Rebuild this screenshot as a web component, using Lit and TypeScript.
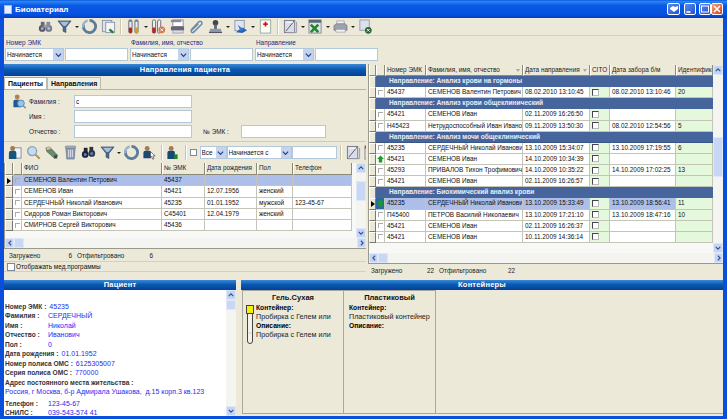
import { LitElement, html, css, svg } from "lit";
import { customElement } from "lit/decorators.js";

const I: Record<string, any> = {
  binoc: svg`<circle cx="4.5" cy="10" r="3.6" fill="#556"/><circle cx="11.5" cy="10" r="3.6" fill="#778"/><rect x="3" y="3" width="4" height="6" fill="#667"/><rect x="9" y="3" width="4" height="6" fill="#889"/><rect x="6" y="6" width="4" height="3" fill="#99a"/><circle cx="4.5" cy="10" r="1.6" fill="#9ab"/><circle cx="11.5" cy="10" r="1.6" fill="#abc"/>`,
  binocd: svg`<circle cx="4.5" cy="10" r="3.6" fill="#223"/><circle cx="11.5" cy="9" r="3.6" fill="#334"/><rect x="3" y="3" width="4" height="6" fill="#223"/><rect x="9" y="2" width="4" height="6" fill="#334"/><circle cx="4.5" cy="10" r="1.6" fill="#48c"/><circle cx="11.5" cy="9" r="1.6" fill="#48c"/>`,
  funnel: svg`<path d="M1 2h14L9.5 9v5.5L6.5 13V9z" fill="#4a6a8c" stroke="#2c4460" stroke-width=".6"/><path d="M3 3h10L9 7.5H7z" fill="#a8c0d8"/>`,
  refresh: svg`<path d="M8 1.5a6.5 6.5 0 1 1-6.2 4.6" fill="none" stroke="#5c7c9c" stroke-width="3"/><path d="M1 9a7 7 0 0 1 5-7.4" fill="none" stroke="#9ab2ca" stroke-width="2.6"/>`,
  copy: svg`<rect x="1.5" y="1.5" width="10" height="12" fill="#dde4ee" stroke="#8a96a8"/><rect x="5" y="3.5" width="9.5" height="11" fill="#f2f4f8" stroke="#8a96a8"/><path d="M9 11l4 3.5" stroke="#2a7a30" stroke-width="2.4"/>`,
  tube: svg`<rect x="3" y="1" width="3.4" height="14" rx="1.4" fill="#eee" stroke="#667"/><rect x="3" y="9" width="3.4" height="6" rx="1.2" fill="#b22"/><rect x="9.5" y="1" width="3.4" height="14" rx="1.4" fill="#eee" stroke="#667"/><rect x="9.5" y="9" width="3.4" height="6" rx="1.2" fill="#c9a818"/><rect x="3" y="1" width="3.4" height="2" fill="#68a"/><rect x="9.5" y="1" width="3.4" height="2" fill="#68a"/>`,
  tubex: svg`<rect x="1.5" y="1" width="3.4" height="14" rx="1.4" fill="#eee" stroke="#667"/><rect x="1.5" y="9" width="3.4" height="6" rx="1.2" fill="#b22"/><rect x="7" y="1" width="3.4" height="14" rx="1.4" fill="#eee" stroke="#667"/><circle cx="11.5" cy="11.5" r="3.6" fill="#d8764c"/><path d="M10 10l3 3m0-3l-3 3" stroke="#fff" stroke-width="1"/>`,
  print: svg`<rect x="3" y="1" width="11" height="7" fill="#fff" stroke="#889"/><rect x="1" y="1" width="11" height="2.4" fill="#88a"/><path d="M1 8h14v4H1z" fill="#667"/><path d="M3 12h11v3H3z" fill="#dde" stroke="#778" stroke-width=".6"/>`,
  clip: svg`<path d="M3 13l8.5-9a2 2 0 0 1 3 2.6L6 15a1.4 1.4 0 0 1-2.2-2L11 6" fill="none" stroke="#6a88a8" stroke-width="1.6" transform="translate(-1 -1)"/>`,
  stamp: svg`<circle cx="8" cy="4" r="3" fill="#445"/><rect x="6.5" y="6" width="3" height="5" fill="#667"/><rect x="2" y="10.5" width="12" height="3" fill="#8a98a8"/><rect x="1" y="13.5" width="14" height="1.5" fill="#556"/>`,
  bdoc: svg`<rect x="2" y="1.5" width="10" height="11" fill="#dfe4ee" stroke="#8a98b0"/><path d="M3 14l7-5 5 3-5 3z" fill="#2a62b0"/><path d="M5 6l6 5-3 2z" fill="#3a7ad0"/>`,
  rdoc: svg`<rect x="2.5" y="1" width="11" height="14" fill="#fbfcf4" stroke="#9aa"/><path d="M8 3v5M5.5 5.5h5" stroke="#d01818" stroke-width="1.8"/>`,
  note: svg`<rect x="1.5" y="1.5" width="11" height="13" fill="#d8dee8" stroke="#778"/><path d="M12 2L3 13" stroke="#556" stroke-width="1"/><path d="M3.5 3.5h7" stroke="#fff"/><path d="M14.5 3v11.5H4" fill="none" stroke="#99a"/>`,
  excel: svg`<rect x="1" y="1" width="13" height="14" fill="#dfe4e8" stroke="#889"/><rect x="1" y="1" width="13" height="3" fill="#5a6a78"/><path d="M3 6l8 8m0-8l-8 8" stroke="#1c8a2c" stroke-width="2.8"/>`,
  printg: svg`<path d="M4 2h8v4H4z" fill="#eef" stroke="#889" stroke-width=".6"/><path d="M1 7l3-2h9l2 2v5H1z" fill="#9aa2ac" stroke="#667" stroke-width=".6"/><path d="M3 11h10v3H3z" fill="#f4f4f4" stroke="#889" stroke-width=".6"/>`,
  dx: svg`<rect x="2" y="1" width="10" height="11" fill="#dde2ea" stroke="#99a"/><circle cx="11" cy="12" r="3.6" fill="#2c6a34"/><path d="M9.6 10.6l2.8 2.8m0-2.8l-2.8 2.8" stroke="#fff"/>`,
  userdoc: svg`<rect x="7" y="3" width="8" height="11" fill="#f0f4f8" stroke="#889"/><circle cx="6" cy="3.6" r="2.6" fill="#a87850"/><path d="M2 15V8.5q0-2.5 2.5-2.5h3Q10 6 10 8.5V15z" fill="#14567e"/>`,
  usermg: svg`<circle cx="5.5" cy="3.2" r="2.6" fill="#b88050"/><path d="M1.5 14V8q0-2 2-2h4q2 0 2 2v6z" fill="#1c5a94"/><circle cx="9.5" cy="10" r="3.6" fill="#9cc4ea" stroke="#58a" /><path d="M12 12.6l2.6 2.6" stroke="#889" stroke-width="1.6"/>`,
  mag: svg`<circle cx="6.5" cy="6.5" r="4.8" fill="#c4dcf0" stroke="#8aa0b8" stroke-width="1.4"/><path d="M10 10l4.6 4.6" stroke="#b09060" stroke-width="2.2"/>`,
  pencil: svg`<path d="M2 3l4-1 8.5 9-3 3.5L3 7z" fill="#6a8a6c" stroke="#40584a" stroke-width=".6"/><path d="M2 3l4-1 1.6 1.8-4 1.4z" fill="#d8c8a0"/><path d="M11 11l3.4 0-.4 3.4-3-.4z" fill="#3a4a3c"/>`,
  trash: svg`<path d="M3 3h10l-1 12H4z" fill="#8c9cac" stroke="#5c6c7c" stroke-width=".6"/><rect x="2.5" y="1" width="11" height="2.4" rx="1" fill="#a8b4c0" stroke="#5c6c7c" stroke-width=".5"/><path d="M6 5v8M8 5v8M10 5v8" stroke="#dde"/>`,
  usercur: svg`<circle cx="5.5" cy="3.6" r="2.6" fill="#a87850"/><path d="M1.5 14V8q0-2 2-2h4q2 0 2 2v6z" fill="#1c4a74"/><path d="M9 7l5 4.6h-2.4l1.2 3-1.4.5-1.2-3L9 13.4z" fill="#fff" stroke="#223" stroke-width=".6"/>`,
  userg: svg`<circle cx="5.5" cy="3.6" r="2.6" fill="#a87850"/><path d="M1.5 15V8q0-2 2-2h4q2 0 2 2v7z" fill="#144a74"/><rect x="9" y="10" width="3.4" height="5" fill="#1c8a1c"/>`,
};
const ic = (n: string) => html`<svg class="ic" viewBox="0 0 16 16">${I[n]}</svg>`;
const caret = html`<i class="caret"></i>`;
const sep = html`<i class="sep"></i>`;
const sel = (t: string, w: string) => html`<span class="sel ${w}"><span class="st">${t}</span><span class="sb"><svg viewBox="0 0 8 6"><path d="M1 1.5l3 3 3-3" fill="none" stroke="#2a3f80" stroke-width="1.4"/></svg></span></span>`;
const sbtn = (d: string) => html`<span class="sbtn"><svg viewBox="0 0 8 8"><path d="${d}" fill="none" stroke="#38508c" stroke-width="1.5"/></svg></span>`;
const UP = "M1 5.5l3-3 3 3", DN = "M1 2.5l3 3 3-3", LF = "M5.5 1l-3 3 3 3", RT = "M2.5 1l3 3-3 3";
const hscroll = html`<div class="hs">${sbtn(LF)}<span class="hthumb"></span><span class="fill"></span>${sbtn(RT)}</div>`;

const leftRows = [
  ["СЕМЕНОВ Валентин Петрович", "45437", "", "", "", 1],
  ["СЕМЕНОВ Иван", "45421", "12.07.1956", "женский", "", 0],
  ["СЕРДЕЧНЫЙ Николай Иванович", "45235", "01.01.1952", "мужской", "123-45-67", 0],
  ["Сидоров Роман Викторович", "С45401", "12.04.1979", "женский", "", 0],
  ["СМИРНОВ Сергей Викторович", "45436", "", "", "", 0],
];
type R = { g?: string; e?: string; n?: string; d?: string; z?: string; id?: string; mark?: string; sel?: boolean };
const rightRows: R[] = [
  { g: "Направление: Анализ крови на гормоны" },
  { e: "45437", n: "СЕМЕНОВ Валентин Петрович", d: "08.02.2010 13:10:45", z: "08.02.2010 13:10:46", id: "20" },
  { g: "Направление: Анализ крови общеклинический" },
  { e: "45421", n: "СЕМЕНОВ Иван", d: "02.11.2009 16:26:50", z: "", id: "" },
  { e: "Н45423", n: "Нетрудоспособный Иван Иванович", d: "09.11.2009 13:50:30", z: "08.02.2010 12:54:56", id: "5" },
  { g: "Направление: Анализ мочи общеклинический" },
  { e: "45235", n: "СЕРДЕЧНЫЙ Николай Иванович", d: "13.10.2009 15:34:07", z: "13.10.2009 17:19:55", id: "6" },
  { e: "45421", n: "СЕМЕНОВ Иван", d: "14.10.2009 10:34:39", z: "", id: "", mark: "g" },
  { e: "45293", n: "ПРИВАЛОВ Тихон Трофимович", d: "14.10.2009 10:35:22", z: "14.10.2009 17:02:25", id: "13" },
  { e: "45421", n: "СЕМЕНОВ Иван", d: "02.11.2009 16:26:57", z: "", id: "" },
  { g: "Направление: Биохимический анализ крови" },
  { e: "45235", n: "СЕРДЕЧНЫЙ Николай Иванович", d: "13.10.2009 15:33:49", z: "13.10.2009 18:56:41", id: "11", mark: "g", sel: true },
  { e: "П45400", n: "ПЕТРОВ Василий Николаевич", d: "13.10.2009 17:21:10", z: "13.10.2009 18:47:16", id: "10" },
  { e: "45421", n: "СЕМЕНОВ Иван", d: "02.11.2009 16:26:37", z: "", id: "" },
  { e: "45421", n: "СЕМЕНОВ Иван", d: "10.11.2009 14:36:14", z: "", id: "" },
];
const patient = [
  ["Номер ЭМК :", "45235", "a"], ["Фамилия :", "СЕРДЕЧНЫЙ", "b"], ["Имя :", "Николай", "b"], ["Отчество :", "Иванович", "b"],
  ["Пол :", "0", "b"], ["Дата рождения :", "01.01.1952", "c"], ["Номер полиса ОМС :", "6125305007", "c"], ["Серия полиса ОМС :", "770000", "c"],
];
const mark = (m?: string) => m ? html`<svg class="mk" viewBox="0 0 8 8"><path d="M4 0l4 4-2 0v4H2V4H0z" fill="#1a9a2a"/></svg>` : html`<i class="tick"></i>`;

@customElement("app-root")
export class AppRoot extends LitElement {
  static styles = css`
    :host { display: block; width: 727px; height: 419px; overflow: hidden; font: 6.4px "Liberation Sans", Arial, sans-serif; color: #111; }
    * { box-sizing: border-box; }
    .win { width: 727px; height: 419px; display: flex; flex-direction: column; background: #0a4fdc; }
    .title { height: 18px; flex: none; display: flex; align-items: center; padding: 0 4px; gap: 3px; color: #fff; font-weight: bold; font-size: 8px;
      background: linear-gradient(#0a58d8, #2a86f4 8%, #0a5ae4 30%, #0550e0 80%, #0640b8); }
    .ti { width: 8px; height: 9px; background: #e8f0ff; border: 1px solid #9ab8ee; }
    .tbtns { margin-left: auto; display: flex; gap: 3px; }
    .tb { width: 12px; height: 12px; border: 1px solid #fff; border-radius: 2px; background: linear-gradient(135deg, #5a8cf0, #2450d0); display: flex; align-items: center; justify-content: center; }
    .tb svg { width: 10px; height: 10px; }
    .tb.close { background: linear-gradient(135deg, #f0a080, #d84018); margin-left: -3px; }
    .tb.hb { margin-right: 1px; width: 13px; }
    .body { flex: 1; min-height: 0; margin: 0 4px 3px; background: #ece9d8; display: flex; flex-direction: column; }
    .tools { height: 18px; flex: none; display: flex; align-items: center; padding-left: 34px; border-bottom: 1px solid #d4d0bc; }
    .ic { width: 15px; height: 15px; flex: none; display: block; }
    .caret { width: 0; height: 0; border: 2px solid transparent; border-top: 2px solid #222; border-bottom: 0; flex: none; margin: 0 -1px; }
    .sep { width: 1px; height: 15px; background: #c8c4b0; border-right: 1px solid #fff; flex: none; box-sizing: content-box; }
    .t1 { gap: 4px; }
    .filters { height: 27px; flex: none; display: flex; padding: 3px 1px 0; gap: 2px; }
    .fg { display: flex; flex-direction: column; gap: 1px; width: 123px; }
    .fg label { color: #1c2a80; height: 8px; line-height: 8px; padding-left: 1px; }
    .fr { display: flex; gap: 1px; }
    .sel { display: flex; align-items: center; height: 13px; background: #fff; border: 1px solid #b4c8dc; padding-left: 1px; flex: none; }
    .st { flex: 1; overflow: hidden; white-space: nowrap; }
    .sb { width: 10px; height: 11px; background: #c4d4f0; display: flex; align-items: center; justify-content: center; flex: none; }
    .sb svg { width: 7px; height: 6px; }
    .s59 { width: 59px; } .s27 { width: 27px; } .s65 { width: 65px; }
    .inp { height: 13px; background: #fff; border: 1px solid #b4c8dc; display: block; padding-left: 1px; line-height: 11px; flex: none; }
    .w63 { width: 63px; } .w45 { width: 45px; } .w118 { width: 118px; } .w85 { width: 85px; }
    .main { height: 213px; flex: none; display: flex; gap: 2px; margin-top: 1px; }
    .lp { width: 362px; flex: none; display: flex; flex-direction: column; }
    .rp { flex: 1; min-width: 0; display: flex; flex-direction: column; }
    .head { height: 12px; flex: none; background: linear-gradient(#3a88d8, #0a5ab0 45%, #04409a); color: #fff; font-weight: bold; text-align: center; line-height: 12px; font-size: 7.5px; letter-spacing: .2px; }
    .bottom .head { height: 10px; line-height: 10px; }
    .tabs { height: 14px; flex: none; display: flex; padding-top: 1px; border-bottom: 1px solid #b8b49e; font-size: 7px; }
    .tab { padding: 0 3px; line-height: 12px; font-weight: bold; border: 1px solid #c0bca8; border-bottom: 0; background: #f0eee2; margin-right: 1px; }
    .tab.on { background: #fff; border-top: 1px solid #e8a020; width: 43px; padding: 0 0 0 3px; margin-right: 0; }
    .form { height: 52px; flex: none; display: flex; flex-direction: column; gap: 2px; padding: 5px 0 0 8px; border-bottom: 1px solid #d0ccb8; }
    .fl { display: flex; align-items: center; height: 13px; }
    .fi { width: 17px; flex: none; }
    .fl b { font-weight: normal; width: 45px; flex: none; color: #223; }
    .fl .ml { width: 38px; margin-left: 11px; }
    .t2 { height: 21px; flex: none; display: flex; align-items: center; gap: 3.5px; padding-left: 3px; overflow: hidden; }
    .chk { width: 7px; height: 7px; background: #fff; border: 1px solid #7a8a9a; flex: none; display: block; }
    .t2c { margin-right: -1px; }
    .selgrp { display: flex; flex: none; }
    .gridl { height: 86px; flex: none; border: 1px solid #9a9a8a; border-width: 0 0 1px 1px; background: #ece9d8; display: flex; flex-direction: column; }
    .gb { flex: 1; min-height: 0; display: flex; }
    .gc { flex: 1; min-width: 0; background: #f8f8f6; }
    .lr { display: grid; grid-template-columns: 8px 9px 140px 43px 52px 36px 59px; height: 11.3px; }
    .lr.hd { height: 12px; }
    .rr { display: grid; grid-template-columns: 7px 9px 41px 97px 67px 20px 66px 37px; height: 11.13px; }
    .rr.hd { height: 11px; }
    .rr .grp { grid-column: 2 / -1; background: #46659c; color: #e8eef8; font-weight: bold; padding-left: 13px; line-height: 10.5px; border-bottom: 1px solid #3a5688; font-size: 6.6px; }
    .c { border-right: 1px solid #c4c4b8; border-bottom: 1px solid #c4c4b8; background: #fff; padding-left: 2px; line-height: 10.5px; white-space: nowrap; overflow: hidden; }
    .hh { background: #ece9d8; border-right: 1px solid #8a8a78; border-bottom: 1px solid #8a8a78; border-left: 1px solid #fff; color: #222; padding-left: 1px; display: flex; align-items: center; justify-content: space-between; }
    .sort { width: 0; height: 0; border: 2px solid transparent; border-top: 3px solid #aaa897; border-bottom: 0; margin-right: 2px; flex: none; }
    .rh { background: #ece9d8; border: 1px solid; border-color: #fff #777 #777 #fff; display: flex; align-items: center; justify-content: center; }
    .arr { width: 0; height: 0; border: 3px solid transparent; border-left: 4px solid #000; border-right: 0; }
    .on .c { background: #adbfe8; }
    .c.s { background: #adbfe8; }
    .ck { display: flex; align-items: center; justify-content: center; padding: 0; }
    .tick { width: 5px; height: 5px; border-left: 1px solid #aaa; border-top: 1px solid #aaa; display: block; }
    .mk { width: 7px; height: 8px; display: block; }
    .mbg { background: #2a6a9c; }
    .gr { background: #e4f8dc; }
    .cito { display: flex; align-items: center; padding: 0 0 0 2px; }
    .cb { width: 7px; height: 7px; background: #fff; border: 1px solid; border-color: #445 #bbb #bbb #445; display: block; }
    .hs { height: 10px; flex: none; display: flex; background: #f4f4f0; }
    .hthumb { width: 10px; background: #c8d8f4; border: 1px solid #dde8fa; }
    .fill { flex: 1; }
    .sbtn { width: 9px; height: 10px; background: #c4d4f4; border: 1px solid #dfe8fa; display: flex; align-items: center; justify-content: center; flex: none; }
    .sbtn svg { width: 6px; height: 6px; }
    .vs { width: 10px; flex: none; background: #f4f4f0; display: flex; flex-direction: column; }
    .vs .sbtn { width: 10px; }
    .vthumb { background: #c8d8f4; border: 1px solid #dde8fa; flex: none; }
    .vl .top { height: 8px; flex: none; }
    .vl .vthumb { height: 20px; }
    .vr .top { height: 62px; flex: none; }
    .vr .vthumb { height: 40px; }
    .vp .vthumb { height: 10px; }
    .grow { flex: 1; }
    .st2 { height: 12px; flex: none; display: flex; align-items: center; padding-left: 5px; color: #222; }
    .st2 .a { width: 44px; } .st2 .n { width: 19px; text-align: right; margin-right: 5px; } .st2 .f { width: 60px; } .st2 .m { width: 16px; text-align: right; }
    .mp { height: 11px; flex: none; display: flex; align-items: center; gap: 1px; padding-left: 3px; border-top: 1px solid #d4d0bc; border-bottom: 1px solid #d4d0bc; }
    .mp .chk { width: 8px; height: 8px; }
    .gridr { height: 200px; flex: none; border-left: 1px solid #9a9a8a; border-bottom: 1px solid #9a9a8a; display: flex; flex-direction: column; padding-top: 1px; }
    .lowst { height: 13px; padding-left: 3px; }
    .bottom { flex: 1; min-height: 0; display: flex; gap: 5px; margin-top: 3px; }
    .pat { width: 232px; flex: none; display: flex; flex-direction: column; }
    .pb { flex: 1; min-height: 0; display: flex; background: #fff; }
    .pc { flex: 1; min-width: 0; padding: 12px 0 0 1px; color: #333; font-weight: bold; }
    .pl { display: flex; height: 9.45px; line-height: 9.45px; white-space: nowrap; gap: 3px; font-size: 6.6px; }
    .pl span { color: #2a2af0; font-weight: normal; font-size: 7px; }
    .pl b { flex: none; }
    .pl .b { width: 40px; }
    .addr { color: #2a2af0; font-weight: normal; height: 12px; line-height: 9.45px; font-size: 7px; white-space: pre; }
    .con { flex: 1; min-width: 0; display: flex; flex-direction: column; }
    .cb2 { flex: 1; min-height: 0; display: flex; padding: 0 0 2px 1px; }
    .cc { border: 1px solid #aaa89a; display: flex; flex-direction: column; }
    .c1 { width: 101px; border-right: 0; } .c2 { width: 93px; } .c3 { flex: 1; border: 0; border-bottom: 1px solid #aaa89a; }
    .ct { text-align: center; font-weight: bold; font-size: 7.5px; height: 12px; line-height: 13px; color: #111; }
    .cd { display: flex; padding-left: 3px; gap: 2px; }
    .cd2 { padding-left: 5px; }
    .ctx { line-height: 9.1px; color: #222; font-size: 7.2px; }
    .ctx b { color: #000; display: block; font-size: 6.7px; }
    .tubei { width: 8px; height: 39px; flex: none; display: block; margin-top: 2px; }
  `;

  render() {
    const rhead = ["Номер ЭМК", "Фамилия, имя, отчество|", "Дата направления|", "СITO", "Дата забора б/м", "Идентифика"];
    return html`<div class="win">
      <div class="title"><i class="ti"></i>Биоматериал
        <div class="tbtns">
          <span class="tb hb"><svg viewBox="0 0 10 10"><path d="M1 4l3-2 2 1 3-1v3L5 8 1 5z" fill="#fff"/></svg></span>
          <span class="tb"><svg viewBox="0 0 10 10"><path d="M1.5 8h4" stroke="#fff" stroke-width="1.6"/></svg></span>
          <span class="tb"><svg viewBox="0 0 10 10"><rect x="1.5" y="2" width="7" height="6" fill="none" stroke="#fff"/></svg></span>
          <span class="tb close"><svg viewBox="0 0 10 10"><path d="M2 2l6 6m0-6L2 8" stroke="#fff" stroke-width="1.5"/></svg></span>
        </div>
      </div>
      <div class="body">
        <div class="tools t1">
          ${ic("binoc")}${ic("funnel")}${caret}${ic("refresh")}${ic("copy")}${sep}
          ${ic("tube")}${caret}${ic("tubex")}${ic("print")}${ic("clip")}${ic("stamp")}${caret}${ic("bdoc")}${caret}${ic("rdoc")}${sep}
          ${ic("note")}${caret}${ic("excel")}${caret}${ic("printg")}${caret}${ic("dx")}
        </div>
        <div class="filters">
          ${["Номер ЭМК", "Фамилия, имя, отчество", "Направление"].map(l => html`<div class="fg"><label>${l}</label><div class="fr">${sel("Начинается", "s59")}<span class="inp w63"></span></div></div>`)}
        </div>
        <div class="main">
          <div class="lp">
            <div class="head">Направления пациента</div>
            <div class="tabs"><span class="tab on">Пациенты</span><span class="tab">Направления</span></div>
            <div class="form">
              <div class="fl"><span class="fi">${ic("usermg")}</span><b>Фамилия :</b><span class="inp w118">с</span></div>
              <div class="fl"><span class="fi"></span><b>Имя :</b><span class="inp w118"></span></div>
              <div class="fl"><span class="fi"></span><b>Отчество :</b><span class="inp w118"></span><b class="ml">№ ЭМК :</b><span class="inp w85"></span></div>
            </div>
            <div class="t2">
              ${ic("userdoc")}${ic("mag")}${ic("pencil")}${ic("trash")}${ic("binocd")}${ic("funnel")}${caret}${ic("refresh")}${ic("usercur")}${sep}${ic("userg")}${sep}
              <i class="chk t2c"></i>
              <span class="selgrp">${sel("Все", "s27")}${sel("Начинается с", "s65")}<span class="inp w45"></span></span>
              ${sep}${ic("note")}${ic("excel")}
            </div>
            <div class="gridl">
              <div class="gb">
                <div class="gc">
                  <div class="lr hd"><span class="c hh"></span><span class="c hh"></span>
                    ${["ФИО", "№ ЭМК", "Дата рождения", "Пол", "Телефон"].map(t => html`<span class="c hh">${t}</span>`)}</div>
                  ${leftRows.map(r => html`<div class="lr ${r[5] ? "on" : ""}">
                    <span class="rh">${r[5] ? html`<i class="arr"></i>` : ""}</span>
                    <span class="c ck"><i class="tick"></i></span>
                    <span class="c">${r[0]}</span><span class="c">${r[1]}</span><span class="c">${r[2]}</span><span class="c">${r[3]}</span><span class="c">${r[4]}</span>
                  </div>`)}
                </div>
                <div class="vs vl">${sbtn(UP)}<span class="top"></span><span class="vthumb"></span><span class="grow"></span>${sbtn(DN)}</div>
              </div>
              ${hscroll}
            </div>
            <div class="st2"><span class="a">Загружено</span><span class="n">6</span><span class="f">Отфильтровано</span><span class="m">6</span></div>
            <div class="mp"><i class="chk"></i>Отображать мед.программы</div>
          </div>
          <div class="rp">
            <div class="gridr">
              <div class="gb">
                <div class="gc">
                  <div class="rr hd"><span class="c hh"></span><span class="c hh"></span>
                    ${rhead.map(t => html`<span class="c hh">${t.replace("|", "")}${t.endsWith("|") ? html`<i class="sort"></i>` : ""}</span>`)}</div>
                  ${rightRows.map(r => {
                    const s = r.sel ? "s" : "";
                    return r.g ? html`<div class="rr"><span class="rh"></span><span class="grp">${r.g}</span></div>` : html`<div class="rr">
                    <span class="rh">${r.sel ? html`<i class="arr"></i>` : ""}</span>
                    <span class="c ck ${r.sel ? "mbg" : ""}">${mark(r.mark)}</span>
                    <span class="c ${s}">${r.e}</span>
                    <span class="c ${s}">${r.n}</span>
                    <span class="c ${s}">${r.d}</span>
                    <span class="c cito gr"><i class="cb"></i></span>
                    <span class="c ${s}">${r.z}</span>
                    <span class="c gr">${r.id}</span>
                  </div>`;
                  })}
                </div>
                <div class="vs vr">${sbtn(UP)}<span class="top"></span><span class="vthumb"></span><span class="grow"></span>${sbtn(DN)}</div>
              </div>
              ${hscroll}
            </div>
            <div class="st2 lowst"><span class="a">Загружено</span><span class="n">22</span><span class="f">Отфильтровано</span><span class="m">22</span></div>
          </div>
        </div>
        <div class="bottom">
          <div class="pat">
            <div class="head">Пациент</div>
            <div class="pb">
              <div class="pc">
                ${patient.map(p => html`<div class="pl"><b class="${p[2] === "b" ? "b" : ""}">${p[0]}</b><span>${p[1]}</span></div>`)}
                <div class="pl"><b>Адрес постоянного места жительства :</b></div>
                <div class="addr">Россия, г Москва, б-р Адмирала Ушакова,  д.15 корп.3 кв.123</div>
                <div class="pl"><b class="b">Телефон :</b><span>123-45-67</span></div>
                <div class="pl"><b class="b">СНИЛС :</b><span>039-543-574 41</span></div>
              </div>
              <div class="vs vp">${sbtn(UP)}<span class="vthumb"></span><span class="grow"></span>${sbtn(DN)}</div>
            </div>
          </div>
          <div class="con">
            <div class="head">Контейнеры</div>
            <div class="cb2">
              <div class="cc c1">
                <div class="ct">Гель.Сухая</div>
                <div class="cd">
                  <svg class="tubei" viewBox="0 0 8 39"><path d="M1.5 8v28a2.5 2.5 0 0 0 5 0V8" fill="#f4f2e8" stroke="#444"/><path d="M2.5 28h3" stroke="#bcc"/><rect x=".5" y=".5" width="7" height="8" fill="#f4ee10" stroke="#444"/></svg>
                  <div class="ctx"><b>Контейнер:</b>Пробирка с Гелем или<b>Описание:</b>Пробирка с Гелем или</div>
                </div>
              </div>
              <div class="cc c2">
                <div class="ct">Пластиковый</div>
                <div class="cd cd2"><div class="ctx"><b>Контейнер:</b>Пластиковый контейнер<b>Описание:</b></div></div>
              </div>
              <div class="cc c3"></div>
            </div>
          </div>
        </div>
      </div>
    </div>`;
  }
}
